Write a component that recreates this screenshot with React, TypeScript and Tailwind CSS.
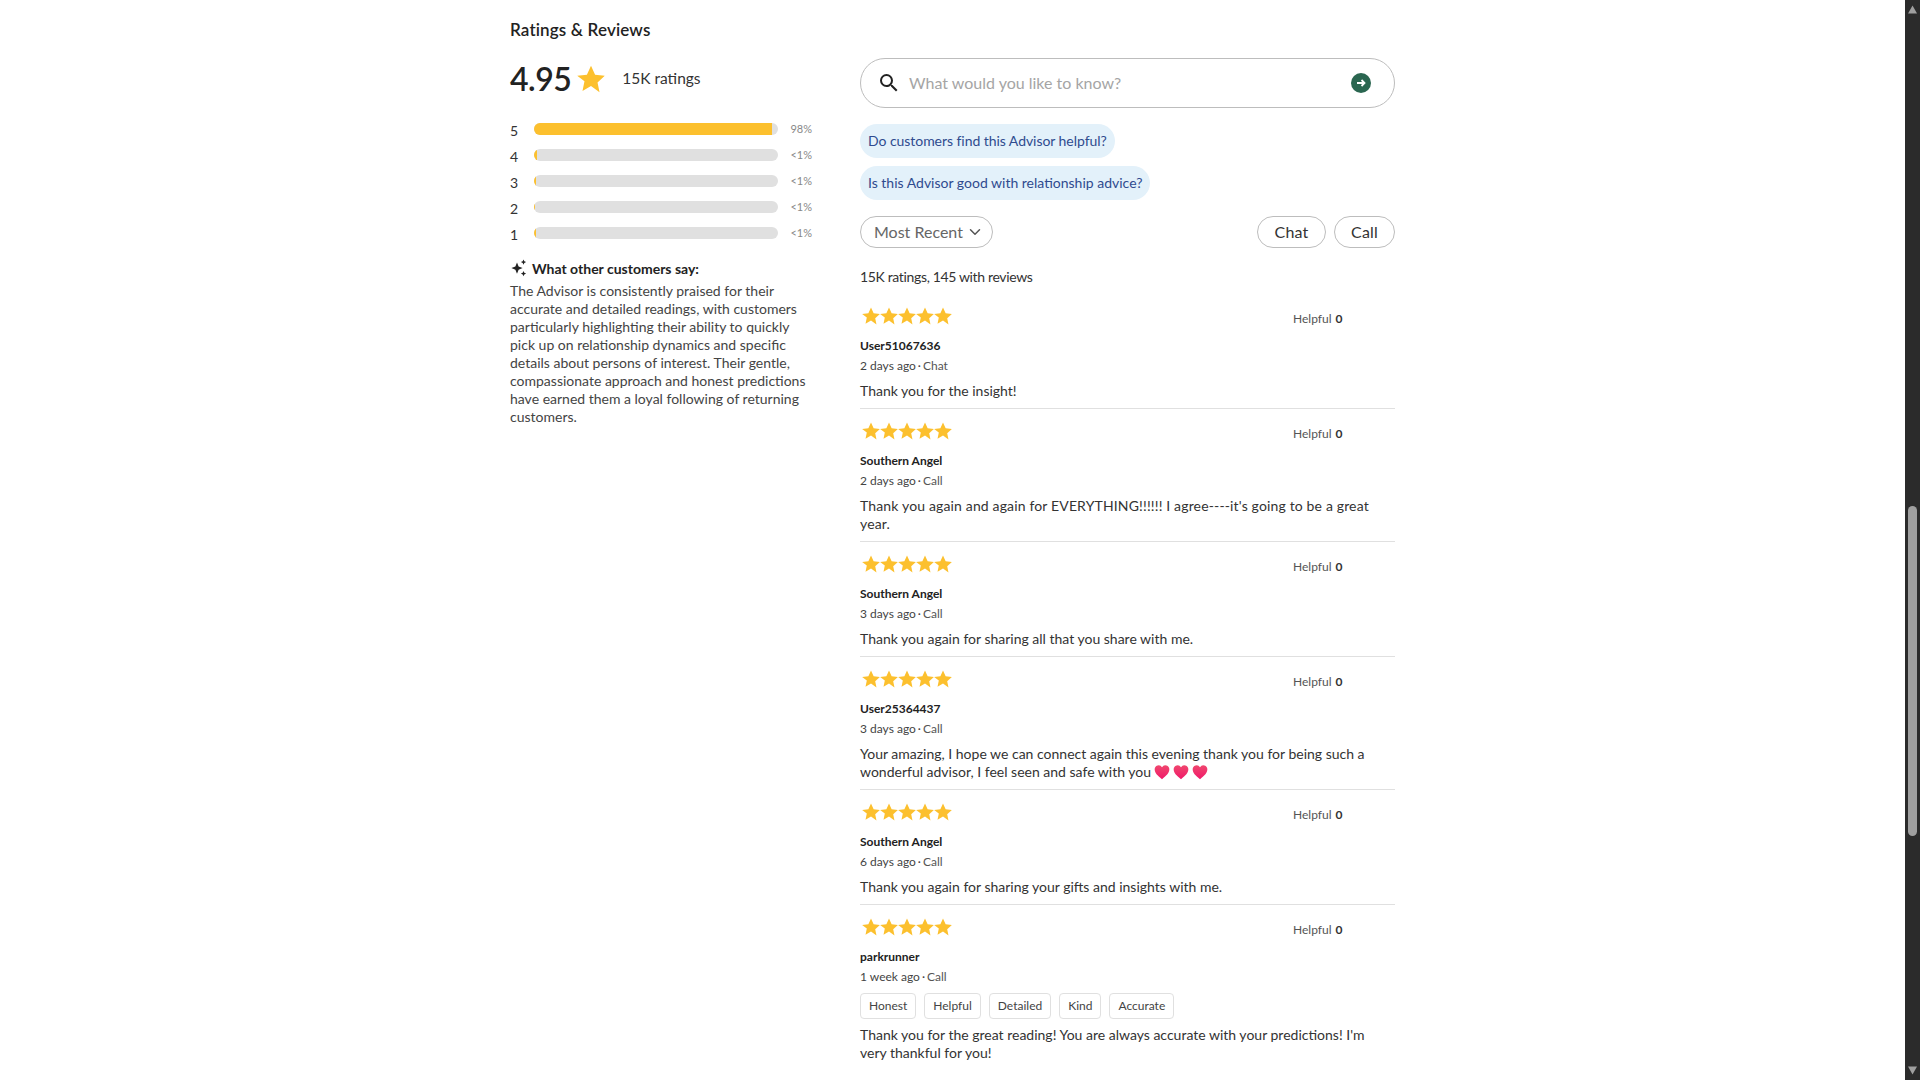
import { ChevronDown } from 'lucide-react';

const YELLOW = '#fcc02e';

const bars = [
  { label: '5', fill: 97.6, pct: '98%' },
  { label: '4', fill: 1.4, pct: '<1%' },
  { label: '3', fill: 0.8, pct: '<1%' },
  { label: '2', fill: 0.6, pct: '<1%' },
  { label: '1', fill: 0.8, pct: '<1%' },
];

const reviews = [
  { name: 'User51067636', when: '2 days ago', via: 'Chat', body: 'Thank you for the insight!' },
  {
    name: 'Southern Angel',
    when: '2 days ago',
    via: 'Call',
    body: "Thank you again and again for EVERYTHING!!!!!! I agree----it's going to be a great year.",
    bodyClass: 'tracking-[0.15px]',
  },
  { name: 'Southern Angel', when: '3 days ago', via: 'Call', body: 'Thank you again for sharing all that you share with me.' },
  {
    name: 'User25364437',
    when: '3 days ago',
    via: 'Call',
    body: 'Your amazing, I hope we can connect again this evening thank you for being such a wonderful advisor, I feel seen and safe with you',
    hearts: true,
  },
  { name: 'Southern Angel', when: '6 days ago', via: 'Call', body: 'Thank you again for sharing your gifts and insights with me.' },
  {
    name: 'parkrunner',
    when: '1 week ago',
    via: 'Call',
    tags: ['Honest', 'Helpful', 'Detailed', 'Kind', 'Accurate'],
    body: "Thank you for the great reading! You are always accurate with your predictions! I'm very thankful for you!",
  },
];

function Star({ size }: { size: number }) {
  return (
    <svg width={size} height={size} viewBox="0 0 24 24" fill={YELLOW}>
      <path d="M12 .6l3.500 7.800 8.300 .9-6.200 5.700 1.700 8.300L12 18.100 4.700 22.300l1.700-8.300L.2 9.300l8.300-.9z" />
    </svg>
  );
}

function Heart() {
  return (
    <svg width="16" height="16" viewBox="0 0 24 24" className="inline-block align-[-3px] ml-[3px]">
      <defs>
        <linearGradient id="heart" x1="0" y1="0" x2="0" y2="1">
          <stop offset="0" stopColor="#f0476e" />
          <stop offset="1" stopColor="#f0186a" />
        </linearGradient>
      </defs>
      <path fill="url(#heart)" d="M12 23C5 17 1 13.500 1 8a6 6 0 0 1 11-3.300A6 6 0 0 1 23 8c0 5.500-4 9-11 15z" />
    </svg>
  );
}

function Sparkle() {
  return (
    <svg width="18" height="18" viewBox="0 0 18 18" fill="#222">
      <path d="M7 3.500l1.600 4 4 1.600-4 1.600-1.600 4-1.600-4-4-1.600 4-1.600z" />
      <path d="M13.500 .5l.8 1.800 1.800.8-1.800.8-.8 1.800-.8-1.800-1.800-.8 1.800-.8z" />
      <path d="M13.500 12l.8 1.800 1.800.8-1.800.8-.8 1.800-.8-1.800-1.800-.8 1.800-.8z" />
    </svg>
  );
}

function Review({ review, last }: { review: (typeof reviews)[number]; last: boolean }) {
  return (
    <div className={`pt-[13px] pb-[8px] ${last ? '' : 'border-b border-[#e0e0e0]'}`}>
      <div className="flex items-center h-[18px] pl-[2px]">
        <div className="flex w-[431px]">
          {[0, 1, 2, 3, 4].map((i) => (
            <Star key={i} size={18} />
          ))}
        </div>
        <div className="text-[12px] text-[#555] mt-[5px]">
          Helpful <span className="font-bold text-[#333] ml-[1px]">0</span>
        </div>
      </div>
      <div className="mt-[12px] text-[12px] leading-[18px] font-bold text-[#222]">{review.name}</div>
      <div className="mt-[2px] text-[12px] leading-[18px] text-[#444]">
        {review.when}
        <span className="mx-[2px]">·</span>
        <span className="text-[#555]">{review.via}</span>
      </div>
      {review.tags && (
        <div className="flex gap-[8px] mt-[7px] mb-[2px]">
          {review.tags.map((t) => (
            <span key={t} className="h-[26px] px-[8px] flex items-center border border-[#e0e0e0] rounded-[4px] text-[12px] text-[#444]">
              {t}
            </span>
          ))}
        </div>
      )}
      <p className={`mt-[7px] w-[520px] text-[14px] leading-[18px] text-[#333] ${review.bodyClass ?? ''}`}>
        {review.body}
        {review.hearts && (
          <>
            <Heart />
            <Heart />
            <Heart />
          </>
        )}
      </p>
    </div>
  );
}

export default function App() {
  return (
    <div className="h-screen overflow-hidden flex bg-white font-['Lato',sans-serif] text-[#222]">
      <div className="flex-1 pl-[510px] pt-[18px]">
        <h2 className="text-[17px] leading-[24px] font-semibold tracking-[0.15px]">Ratings &amp; Reviews</h2>

        <div className="flex mt-[16px]">
          {/* Left column */}
          <div className="w-[350px] shrink-0">
            <div className="flex items-center h-[40px] mt-[1px]">
              <span className="text-[32px] leading-[40px] font-semibold tracking-[-0.5px]">4.95</span>
              <span className="ml-[6px] -mt-[1px]">
                <Star size={28} />
              </span>
              <span className="ml-[17px] text-[15.5px] text-[#333]">15K ratings</span>
            </div>

            <div className="mt-[24px] w-[302px] flex flex-col gap-[14px]">
              {bars.map((b) => (
                <div key={b.label} className="flex items-center h-[12px]">
                  <span className="w-[24px] text-[14px] mt-[3px] text-[#333]">{b.label}</span>
                  <div className="w-[244px] h-[12px] rounded-full bg-[#e0e0e0] overflow-hidden">
                    <div className="h-full bg-[#fcc02e]" style={{ width: `${b.fill}%` }} />
                  </div>
                  <span className="ml-auto text-[11px] text-[#888]">{b.pct}</span>
                </div>
              ))}
            </div>

            <div className="mt-[20px] flex items-center gap-[4px] h-[18px]">
              <Sparkle />
              <span className="text-[14px] font-bold text-[#222]">What other customers say:</span>
            </div>
            <p className="mt-[5px] w-[305px] text-[14px] leading-[18px] text-[#444]">
              The Advisor is consistently praised for their accurate and detailed readings, with customers particularly highlighting their ability to quickly pick up on relationship dynamics and specific details about persons of interest. Their gentle, compassionate approach and honest predictions have earned them a loyal following of returning customers.
            </p>
          </div>

          {/* Right column */}
          <div className="w-[535px] shrink-0">
            <div className="h-[50px] border border-[#bdbdbd] rounded-[25px] flex items-center pl-[16px] pr-[23px]">
              <svg width="24" height="24" viewBox="0 0 24 24" fill="#222">
                <path d="M15.500 14h-.79l-.28-.27A6.471 6.471 0 0 0 16 9.500 6.500 6.500 0 1 0 9.500 16c1.610 0 3.090-.59 4.230-1.570l.27.28v.79l5 4.990L20.490 19l-4.990-5zm-6 0C7.010 14 5 11.990 5 9.500S7.010 5 9.500 5 14 7.010 14 9.500 11.990 14 9.500 14z" />
              </svg>
              <span className="ml-[8px] flex-1 text-[16px] text-[#a5a5a5]">What would you like to know?</span>
              <span className="w-[20px] h-[20px] rounded-full bg-[#2a6650] flex items-center justify-center">
                <svg width="10" height="10" viewBox="0 0 10 10" fill="none" stroke="#fff" strokeWidth="1.800">
                  <path d="M1 5h7M5.500 2l3 3-3 3" />
                </svg>
              </span>
            </div>

            <div className="mt-[16px] flex flex-col items-start gap-[8px]">
              <span className="h-[34px] px-[8px] pb-[1px] rounded-[17px] bg-[#e3f1fa] flex items-center text-[14px] tracking-[-0.05px] text-[#2f4b8f]">
                Do customers find this Advisor helpful?
              </span>
              <span className="h-[34px] px-[8px] pb-[1px] rounded-[17px] bg-[#e3f1fa] flex items-center text-[14px] text-[#2f4b8f]">
                Is this Advisor good with relationship advice?
              </span>
            </div>

            <div className="mt-[16px] flex items-center">
              <span className="h-[32px] w-[133px] pl-[13px] pb-[1px] rounded-full border border-[#bdbdbd] flex items-center gap-[3px] text-[16px] text-[#666]">
                Most Recent
                <ChevronDown size={18} strokeWidth={2} className="text-[#555]" />
              </span>
              <span className="ml-auto h-[32px] w-[69px] pb-[1px] rounded-full border border-[#bdbdbd] flex items-center justify-center text-[16px] tracking-[0.2px] text-[#333]">
                Chat
              </span>
              <span className="ml-[8px] h-[32px] w-[61px] pb-[1px] rounded-full border border-[#bdbdbd] flex items-center justify-center text-[16px] tracking-[0.2px] text-[#333]">
                Call
              </span>
            </div>

            <div className="mt-[20px] text-[14px] leading-[18px] tracking-[-0.35px] text-[#333]">15K ratings, 145 with reviews</div>

            <div className="mt-[8px]">
              {reviews.map((r, i) => (
                <Review key={i} review={r} last={i === reviews.length - 1} />
              ))}
            </div>
          </div>
        </div>
      </div>

      {/* Scrollbar */}
      <div className="w-[15px] shrink-0 bg-[#2b2b2b] flex flex-col items-center">
        <svg width="15" height="15" viewBox="0 0 15 15" fill="#9f9f9f" className="mt-[2px]">
          <path d="M7.500 3.500l4.500 8H3z" />
        </svg>
        <div className="mt-[489px] w-[9px] h-[330px] rounded-full bg-[#9f9f9f]" />
        <svg width="15" height="15" viewBox="0 0 15 15" fill="#9f9f9f" className="mt-auto mb-[2px]">
          <path d="M3 3.500h9l-4.500 8z" />
        </svg>
      </div>
    </div>
  );
}
